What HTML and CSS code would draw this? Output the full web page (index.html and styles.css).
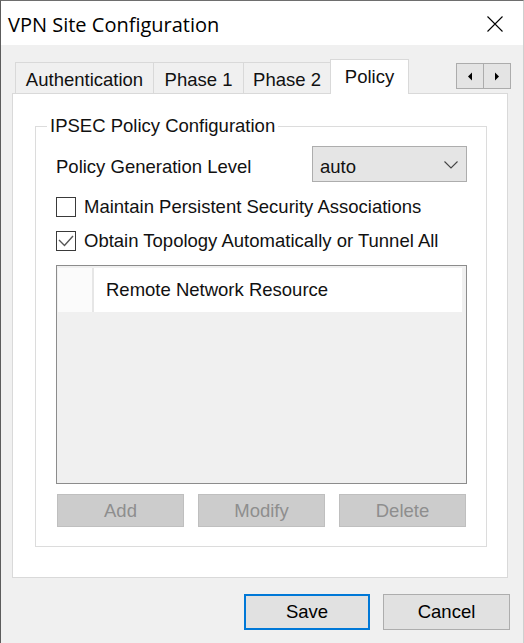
FILE: index.html
```html
<!DOCTYPE html>
<html lang="en">

<head>
    <meta charset="UTF-8">
    <meta name="viewport" content="width=device-width, initial-scale=1.0">
    <title>VPN Site Configuration</title>
    <link rel="stylesheet" href="styles.css">
</head>

<body>
    <div class="window">
        <div class="titlebar">
            <span class="title">VPN Site Configuration</span>
            <svg class="close" width="16" height="16" viewBox="0 0 16 16">
                <path d="M0.5 0.5 L15.5 15.5 M15.5 0.5 L0.5 15.5" stroke="#000" stroke-width="1.1" fill="none" />
            </svg>
        </div>

        <div class="client">
            <div class="tabs">
                <div class="tab tab-auth">Authentication</div>
                <div class="tab tab-p1">Phase 1</div>
                <div class="tab tab-p2">Phase 2</div>
                <div class="tab tab-policy active">Policy</div>
                <div class="tab-scroll">
                    <span class="scroll-btn">
                        <svg width="6" height="9" viewBox="0 0 6 9"><path d="M5 0.5 L1 4.5 L5 8.5 Z" fill="#000" /></svg>
                    </span>
                    <span class="scroll-btn">
                        <svg width="6" height="9" viewBox="0 0 6 9"><path d="M1 0.5 L5 4.5 L1 8.5 Z" fill="#000" /></svg>
                    </span>
                </div>
            </div>

            <div class="panel">
                <fieldset class="group">
                    <legend>IPSEC Policy Configuration</legend>

                    <div class="field-row">
                        <span class="label">Policy Generation Level</span>
                        <div class="combo">
                            <span>auto</span>
                            <svg width="14" height="8" viewBox="0 0 14 8">
                                <path d="M0.5 0.5 L7 7 L13.5 0.5" stroke="#444" stroke-width="1.1" fill="none" />
                            </svg>
                        </div>
                    </div>

                    <div class="check first">
                        <span class="box"></span>
                        <span>Maintain Persistent Security Associations</span>
                    </div>
                    <div class="check">
                        <span class="box">
                            <svg width="18" height="18" viewBox="0 0 18 18">
                                <path d="M2 8 L7.5 13.5 L16 4" stroke="#555" stroke-width="1.4" fill="none" />
                            </svg>
                        </span>
                        <span>Obtain Topology Automatically or Tunnel All</span>
                    </div>

                    <div class="list">
                        <div class="list-head">
                            <div class="col-icon"></div>
                            <div class="col-name">Remote Network Resource</div>
                        </div>
                    </div>

                    <div class="list-actions">
                        <button class="btn-disabled" disabled>Add</button>
                        <button class="btn-disabled" disabled>Modify</button>
                        <button class="btn-disabled" disabled>Delete</button>
                    </div>
                </fieldset>
            </div>

            <div class="footer">
                <button class="btn btn-default">Save</button>
                <button class="btn">Cancel</button>
            </div>
        </div>
    </div>
</body>

</html>
```

FILE: styles.css
```css
body {
    margin: 0;
    font-family: "Liberation Sans", Arial, sans-serif;
    color: #111;
}

.window {
    width: 524px;
    height: 643px;
    box-sizing: border-box;
    background: #f0f0f0;
    border-top: 1px solid #6e6e6e;
    border-left: 1px solid #5c5c5c;
    border-right: 1px solid #cfcfcf;
}


/* 标题栏 */

.titlebar {
    height: 44px;
    display: flex;
    align-items: center;
    justify-content: space-between;
    padding: 2px 20px 0 7px;
    box-sizing: border-box;
    background: #fff;
}

.titlebar .title {
    font-family: "Open Sans", "Noto Sans", sans-serif;
    font-size: 20px;
    color: #000;
}


/* 选项卡 */

.client {
    padding: 14px 12px 0 11px;
}

.tabs {
    display: flex;
    align-items: flex-end;
    padding-left: 3px;
}

.tab {
    height: 31px;
    box-sizing: border-box;
    display: flex;
    align-items: center;
    justify-content: center;
    padding-top: 3px;
    margin-left: -1px;
    font-size: 18.5px;
    background: #f0f0f0;
    border: 1px solid #d9d9d9;
    border-bottom: none;
}

.tab-auth {
    width: 139px;
    margin-left: 0;
}

.tab-p1 {
    width: 91px;
}

.tab-p2 {
    width: 88px;
}

.tab-policy {
    width: 79px;
}

.tab.active {
    height: 35px;
    padding-top: 0;
    margin-bottom: -1px;
    background: #fff;
    position: relative;
    z-index: 1;
}

.tab-scroll {
    display: flex;
    align-self: flex-start;
    margin: 4px 0 0 auto;
}

.scroll-btn {
    width: 28px;
    height: 26px;
    box-sizing: border-box;
    display: flex;
    align-items: center;
    justify-content: center;
    background: #e4e4e4;
    border: 1px solid #acacac;
}

.scroll-btn + .scroll-btn {
    margin-left: -1px;
}


/* 选项卡内容 */

.panel {
    height: 485px;
    box-sizing: border-box;
    margin-right: 3px;
    padding: 0 20px 0 22px;
    background: #fff;
    border: 1px solid #d9d9d9;
}

.group {
    margin: 22px 0 0;
    padding: 10px 19px 19px 20px;
    min-width: 0;
    border: 1px solid #dcdcdc;
    font-size: 18.5px;
}

.group legend {
    margin-left: -9px;
    padding: 0 3px;
    line-height: 20px;
}

.field-row {
    display: flex;
    justify-content: space-between;
    align-items: flex-start;
}

.field-row .label {
    margin-top: 10px;
    line-height: 21px;
}

.combo {
    width: 155px;
    height: 36px;
    box-sizing: border-box;
    display: flex;
    align-items: center;
    justify-content: space-between;
    padding: 5px 8px 0 7px;
    background: #e5e5e5;
    border: 1px solid #adadad;
}

.combo svg {
    margin-bottom: 4px;
}

.check {
    display: flex;
    align-items: center;
    gap: 8px;
    margin-top: 14px;
    line-height: 20px;
}

.check.first {
    margin-top: 15px;
}

.check .box {
    width: 20px;
    height: 20px;
    box-sizing: border-box;
    display: flex;
    align-items: center;
    justify-content: center;
    background: #fff;
    border: 1px solid #3a3a3a;
}


/* 列表 */

.list {
    height: 219px;
    box-sizing: border-box;
    margin-top: 14px;
    padding: 1px 4px 1px 1px;
    background: #f0f0f0;
    border: 1px solid #8c8c8c;
}

.list-head {
    display: flex;
    height: 44px;
    margin-top: 1px;
}

.list-head .col-icon {
    width: 34px;
    background: #fbfbfb;
    border-right: 2px solid #e6e6e6;
}

.list-head .col-name {
    flex: 1;
    display: flex;
    align-items: center;
    padding-left: 12px;
    background: #fff;
}

.list-actions {
    display: flex;
    justify-content: space-between;
    margin-top: 10px;
    padding: 0 1px;
}

.btn-disabled {
    width: 127px;
    height: 33px;
    font-family: inherit;
    font-size: 18.5px;
    color: #8e8e8e;
    background: #cccccc;
    border: 1px solid #bfbfbf;
}


/* 底部按钮 */

.footer {
    display: flex;
    justify-content: flex-end;
    gap: 13px;
    margin-top: 16px;
    padding-right: 1px;
}

.btn {
    width: 127px;
    height: 36px;
    font-family: inherit;
    font-size: 18.5px;
    color: #000;
    background: #e1e1e1;
    border: 1px solid #adadad;
}

.btn-default {
    width: 126px;
    border: 2px solid #0078d7;
}
```
